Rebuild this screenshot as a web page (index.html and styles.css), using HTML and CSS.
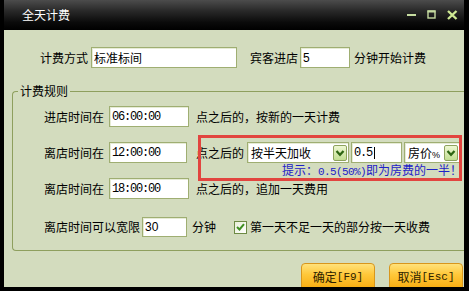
FILE: index.html
```html
<!DOCTYPE html>
<html lang="zh">
<head>
<meta charset="utf-8">
<link rel="stylesheet" href="styles.css">
</head>
<body>
<div class="window">
  <div class="titlebar">
    <span class="title">全天计费</span>
    <div class="winbtns">
      <svg class="wb" width="10" height="10" viewBox="0 0 10 10"><rect x="0" y="4" width="9" height="2" fill="#c6dca0"/></svg>
      <svg class="wb" width="10" height="10" viewBox="0 0 10 10"><rect x="1" y="1" width="7" height="7" fill="none" stroke="#c6dca0" stroke-width="1.4"/><rect x="0.5" y="0.5" width="8" height="2" fill="#c6dca0"/></svg>
      <svg class="wb" width="11" height="10" viewBox="0 0 11 10"><path d="M1 1 L9.5 9 M9.5 1 L1 9" stroke="#cfea94" stroke-width="2.4"/></svg>
    </div>
  </div>
  <div class="content">
    <div class="row first">
      <span class="lbl">计费方式</span>
      <span class="field w146 cjk">标准标间</span>
      <span class="lbl ml13">宾客进店</span>
      <span class="field w50 num ml2">5</span>
      <span class="lbl ml4">分钟开始计费</span>
    </div>
    <div class="group">
      <span class="legend">计费规则</span>
      <div class="row">
        <span class="lbl">进店时间在</span>
        <span class="field w80 time ml5">06:00:00</span>
        <span class="lbl ml7">点之后的，按新的一天计费</span>
      </div>
      <div class="row">
        <span class="lbl">离店时间在</span>
        <span class="field w78 time ml5">12:00:00</span>
        <span class="lbl ml9">点之后的</span>
        <span class="field select w102 cjk ml3"><span class="seltext">按半天加收</span><span class="arrow"><svg width="10" height="8" viewBox="0 0 10 8"><path d="M1.5 2 L5 5.8 L8.5 2" fill="none" stroke="#2d6512" stroke-width="2.2"/></svg></span></span>
        <span class="field w51 time ml2">0.5<span class="caret"></span></span>
        <span class="field select w56 cjk ml2"><span class="seltext">房价<span class="pct">%</span></span><span class="arrow"><svg width="10" height="8" viewBox="0 0 10 8"><path d="M1.5 2 L5 5.8 L8.5 2" fill="none" stroke="#2d6512" stroke-width="2.2"/></svg></span></span>
      </div>
      <div class="row">
        <span class="lbl">离店时间在</span>
        <span class="field w80 time ml5">18:00:00</span>
        <span class="lbl ml7">点之后的，追加一天费用</span>
      </div>
      <div class="row last">
        <span class="lbl">离店时间可以宽限</span>
        <span class="field w45 num ml2 short">30</span>
        <span class="lbl ml5">分钟</span>
        <span class="check"><svg width="9" height="8" viewBox="0 0 9 8"><path d="M1 4 L3.5 6.5 L8 1.2" fill="none" stroke="#3f8f22" stroke-width="2"/></svg></span>
        <span class="lbl ml3">第一天不足一天的部分按一天收费</span>
      </div>
      <div class="annot">
        <div class="hint">提示：<span class="hmono">0.5(50%)</span>即为房费的一半！</div>
      </div>
    </div>
    <div class="footer">
      <span class="btn">确定<span class="mono">[F9]</span></span>
      <span class="btn">取消<span class="mono">[Esc]</span></span>
    </div>
  </div>
</div>
</body>
</html>
```

FILE: styles.css
```css
* { box-sizing: border-box; }
html, body { margin: 0; padding: 0; background: #000; }
body {
  font-family: "Noto Sans CJK SC", "Noto Sans", sans-serif;
  font-size: 12px;
  color: #000;
}
.window {
  width: 469px;
  height: 291px;
  border-left: 4px solid #000;
  border-right: 5px solid #000;
  border-bottom: 4px solid #000;
  display: flex;
  flex-direction: column;
  overflow: hidden;
}
.titlebar {
  height: 30px;
  flex: none;
  display: flex;
  align-items: center;
  justify-content: space-between;
  background: linear-gradient(to bottom, #4c4c4c 0%, #2a2a2a 35%, #0a0a0a 75%, #000 100%);
  padding: 0 6px 1px 18px;
}
.title { color: #fff; font-size: 12px; line-height: 14px; }
.winbtns { display: flex; align-items: center; gap: 10px; }
.wb { display: block; }
.content {
  flex: 1;
  background: #d3dcbe;
  padding: 17px 0 0 8px;
  overflow: hidden;
}
.row {
  display: flex;
  align-items: center;
  height: 21px;
  white-space: nowrap;
}
.row.first { padding-left: 28px; }
.lbl { line-height: 14px; }
.ml2 { margin-left: 2px; }
.ml3 { margin-left: 3px; }
.ml4 { margin-left: 4px; }
.ml5 { margin-left: 5px; }
.ml7 { margin-left: 7px; }
.ml9 { margin-left: 9px; }
.ml13 { margin-left: 13px; }
.field {
  display: flex;
  align-items: center;
  height: 21px;
  background: #fff;
  border: 1px solid #9fae72;
  box-shadow: inset 1px 1px 0 #e6ebd6;
  padding: 0 2px;
  overflow: hidden;
}
.row.first .field { margin-left: 3px; }
.row.first .field.ml2 { margin-left: 2px; }
.w146 { width: 146px; }
.w50 { width: 50px; }
.w80 { width: 80px; }
.w78 { width: 78px; }
.w102 { width: 102px; }
.w51 { width: 51px; }
.w56 { width: 56px; }
.w45 { width: 45px; }
.cjk { font-size: 12px; }
.num { font-family: "Liberation Sans", Arial, sans-serif; font-size: 12px; }
.short { height: 20px; }
.time {
  font-family: "Liberation Mono", monospace;
  font-size: 12px;
  letter-spacing: -1.2px;
}
.caret { display: inline-block; width: 1px; height: 12px; background: #000; margin-left: 2px; }
.select { justify-content: space-between; padding: 0 1px 0 3px; }
.pct { font-family: "Liberation Sans", sans-serif; font-size: 9px; }
.arrow {
  width: 14px;
  height: 16px;
  border: 1px solid #8ea25e;
  border-radius: 2px;
  background: linear-gradient(to bottom, #eef7d2, #c2de92);
  display: flex;
  align-items: center;
  justify-content: center;
}
.arrow svg { display: block; }
.check {
  margin-left: 18px;
  width: 13px;
  height: 13px;
  border: 1px solid #6d8a44;
  background: linear-gradient(to bottom right, #e8efd8, #fff);
  display: flex;
  align-items: center;
  justify-content: center;
}
.check svg { display: block; }
.group {
  position: relative;
  margin-top: 23px;
  border: 1px solid #8e9f5e;
  border-right: none;
  border-radius: 4px 0 0 4px;
  padding: 14px 0 13px 31px;
  display: flex;
  flex-direction: column;
  gap: 15px;
}
.row.last { margin-top: 3px; height: 20px; }
.legend {
  position: absolute;
  top: -8px;
  left: 5px;
  padding: 0 2px;
  background: #d3dcbe;
  line-height: 14px;
}
.annot {
  position: absolute;
  left: 185px;
  top: 43px;
  width: 264px;
  height: 46px;
  display: flex;
  flex-direction: column;
  justify-content: flex-end;
  padding-bottom: 2px;
}
.annot::after {
  content: "";
  position: absolute;
  inset: 0;
  border: 3px solid #e2453f;
  pointer-events: none;
}
.hint {
  color: #1e22c8;
  line-height: 14px;
  text-align: right;
  margin-right: 0;
  white-space: nowrap;
}
.hmono {
  font-family: "Liberation Mono", monospace;
  font-size: 11px;
  letter-spacing: -0.6px;
}
.mono { font-family: "Liberation Mono", monospace; font-size: 11px; }
.footer {
  display: flex;
  justify-content: flex-end;
  gap: 14px;
  margin-top: 12px;
  padding-right: 1px;
}
.btn {
  width: 74px;
  height: 28px;
  border: 1px solid #d8961c;
  border-radius: 4px;
  background: linear-gradient(to bottom, #ffe27a 0%, #ffc83a 40%, #f7a90c 100%);
  color: #2c1e00;
  display: flex;
  align-items: flex-start;
  justify-content: center;
  padding-top: 6px;
  line-height: 14px;
}
```
